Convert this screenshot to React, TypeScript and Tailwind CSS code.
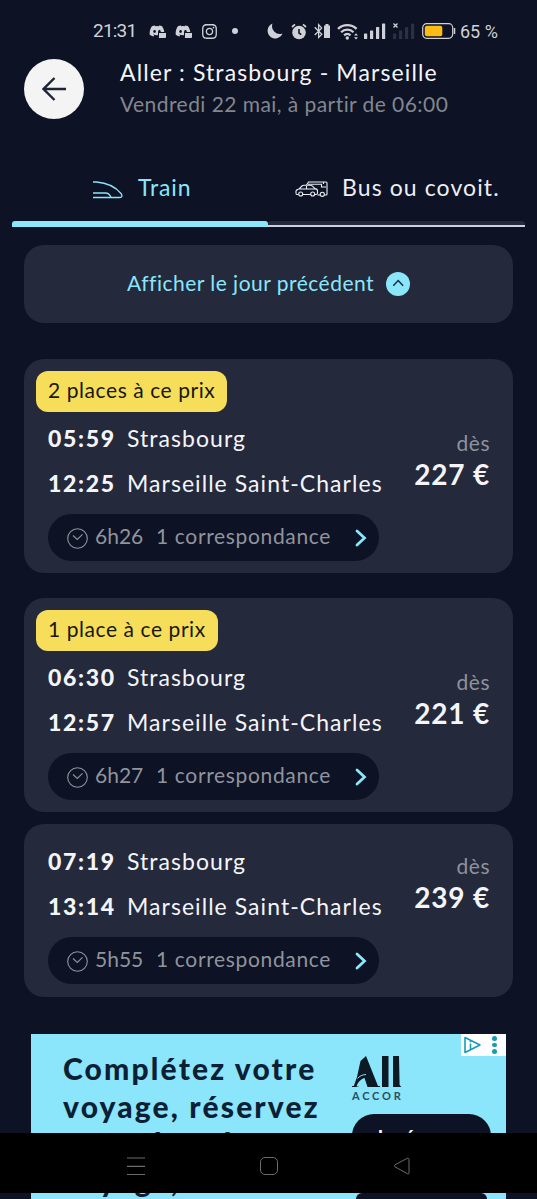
import type { ReactNode } from "react";
import clsx from "clsx";
import { FaBluetoothB, FaDiscord, FaInstagram } from "react-icons/fa";

type Journey = {
  badge?: string;
  departure: string;
  arrival: string;
  duration: string;
  price: string;
};

const journeys: Journey[] = [
  {
    badge: "2 places à ce prix",
    departure: "05:59",
    arrival: "12:25",
    duration: "6h26",
    price: "227 €",
  },
  {
    badge: "1 place à ce prix",
    departure: "06:30",
    arrival: "12:57",
    duration: "6h27",
    price: "221 €",
  },
  {
    departure: "07:19",
    arrival: "13:14",
    duration: "5h55",
    price: "239 €",
  },
];

function DiscordIcon() {
  return (
    <span className="relative block h-[16px] w-[17px]">
      <FaDiscord className="size-[16px]" />
      <span className="absolute right-0 bottom-[1px] h-[6px] w-[8px] rounded-[1px] border-t border-l border-[#0d1224] bg-[#d0d1d8]" />
    </span>
  );
}

function SignalBars({ className }: { className?: string }) {
  return (
    <svg viewBox="0 0 22 16" className={clsx("h-[16px] w-[22px]", className)} fill="currentColor">
      <rect x="0" y="10.5" width="3.2" height="5.5" rx="0.6" />
      <rect x="6" y="7.5" width="3.2" height="8.5" rx="0.6" />
      <rect x="12" y="4" width="3.2" height="12" rx="0.6" />
      <rect x="18" y="0.5" width="3.2" height="15.5" rx="0.6" />
    </svg>
  );
}

function StatusBar() {
  return (
    <div className="flex h-[59px] items-center pt-[3px] pl-[93px] font-[Roboto,sans-serif] text-[19px] text-[#d0d1d8]">
      <span className="w-[56px] text-[19px] tracking-[-0.8px]">21:31</span>
      <div className="flex w-[114px] items-center gap-[9px]">
        <DiscordIcon />
        <DiscordIcon />
        <FaInstagram className="size-[17px]" />
        <span className="ml-[5px] size-[6px] rounded-full bg-current" />
      </div>
      <div className="flex items-center">
        {/* Do not disturb */}
        <svg viewBox="0 0 16 16" className="ml-[4px] size-[16px]" fill="currentColor">
          <path d="M5.500.6A7.700 7.700 0 1 0 15.500 10.500 7.800 7.800 0 0 1 5.500.6z" />
        </svg>
        {/* Alarm */}
        <svg viewBox="0 0 16 17" className="ml-[8px] h-[17px] w-[16px]" fill="none" stroke="currentColor">
          <circle cx="8" cy="9.5" r="6.8" fill="currentColor" stroke="none" />
          <path d="M1 4 4 1.3M15 4 12 1.3" strokeWidth="1.7" />
          <path d="M8 6v4l2.3 1.6" stroke="#0d1224" strokeWidth="1.6" />
        </svg>
        <FaBluetoothB className="ml-[6px] h-[16px] w-[11px]" />
        <svg viewBox="0 0 6 14" className="h-[14px] w-[6px]" fill="currentColor">
          <path d="M1.5 0h3v1.5H6V14H0V1.5h1.5z" />
        </svg>
        {/* Wifi */}
        <svg viewBox="0 0 22 17" className="ml-[7px] h-[17px] w-[22px]" fill="none" stroke="currentColor" strokeWidth="2.3">
          <path d="M1 5.8a13.4 13.4 0 0 1 18.6 0M4.1 9.2a8.8 8.8 0 0 1 12.4 0M7.1 12.3a4.6 4.6 0 0 1 6.4 0" />
          <circle cx="10.3" cy="15" r="1.7" fill="currentColor" stroke="none" />
          <path d="m17 12.5 2-2.2 2 2.2zM17 14.2l2 2.2 2-2.2z" fill="currentColor" stroke="none" />
        </svg>
        <SignalBars className="ml-[5px]" />
        <span className="relative ml-[7px]">
          <SignalBars className="text-[#2c3040]" />
          <svg viewBox="0 0 5 5" className="absolute top-0 left-0 size-[5px]" stroke="currentColor" strokeWidth="1.3">
            <path d="m.5.5 4 4M4.5.5l-4 4" />
          </svg>
        </span>
        {/* Battery */}
        <svg viewBox="0 0 34 16" className="ml-[7px] h-[16px] w-[34px]" fill="none">
          <rect x="0.7" y="0.7" width="30" height="14.6" rx="4" stroke="currentColor" strokeWidth="1.2" />
          <rect x="2.8" y="2.8" width="17.5" height="10.4" rx="2" fill="#fdbb14" />
          <path d="M32.5 5v6" stroke="currentColor" strokeWidth="1.5" />
        </svg>
        <span className="ml-[4px] text-[18px] whitespace-nowrap">65 %</span>
      </div>
    </div>
  );
}

function Header() {
  return (
    <header className="flex h-[60px] pl-6">
      <button className="flex size-[60px] items-center justify-center rounded-full bg-[#f4f4f5]" aria-label="Retour">
        <svg viewBox="0 0 24 24" className="size-6" fill="none" stroke="#1c2436" strokeWidth="2.4">
          <path d="M24 12H2M12.5 1 1.5 12l11 11" />
        </svg>
      </button>
      <div className="pl-9 whitespace-nowrap">
        <h1 className="text-[23px] leading-[27px] tracking-[1.12px] text-[#f4f5f9]">
          Aller : Strasbourg - Marseille
        </h1>
        <p className="pt-[4px] text-[21px] leading-[28px] tracking-[0.44px] text-[#83868f]">
          Vendredi 22 mai, à partir de 06:00
        </p>
      </div>
    </header>
  );
}

function Tabs() {
  return (
    <nav className="mt-[31px] flex px-3">
      <button className="flex h-[77px] w-[256px] flex-col text-[#8ae6fa]">
        <span className="flex h-[71px] w-full items-center pt-[4px] pl-[80px] text-[23px] tracking-[0.9px]">
          <svg viewBox="0 0 31 18" className="mt-[4px] h-[18px] w-[31px]" fill="none" stroke="currentColor" strokeWidth="1.3">
            <path d="M1 1h3.500C15 1.800 24 6.500 29 12.500c2 2.800.6 4-2 4H1" />
            <path d="M1 12h12.500c3 0 4.500 1.800 5.500 4.500" />
          </svg>
          <span className="pl-[15px]">Train</span>
        </span>
        <span className="h-[6px] w-full rounded-t-[3px] bg-[#8ae6fa]" />
      </button>
      <button className="flex h-[77px] w-[257px] flex-col text-[#eeeff5]">
        <span className="flex h-[71px] w-full items-center pt-[4px] pl-[27px] text-[23px] tracking-[1.1px] whitespace-nowrap">
          <svg viewBox="0 0 33 16" className="mt-[3px] h-[16px] w-[33px]" fill="none" stroke="currentColor" strokeWidth="1.1">
            <path d="M11.500 4 13.500 1h17.500q1 0 1 1v11q0 1-1 1h-1.500M13 3.200h13.500v2.800H31M28.500 1v2M22.500 14H25" />
            <path d="M3.300 13.500H1.700Q1 13.500 1 12v-2q.5-1.500 3-2l3-3q.7-.700 2-.7h6.500q1 0 2 .8l2.500 2.500q2.500.4 2.500 2.400v2q0 1.500-1.500 1.500H20M8 13.500h7.500M4 8h16M11.500 5v3" />
            <circle cx="5.700" cy="13" r="2" />
            <circle cx="17.700" cy="13" r="2" />
            <circle cx="27.300" cy="13.300" r="2.100" />
          </svg>
          <span className="pl-[14px]">Bus ou covoit.</span>
        </span>
        <span className="h-[6px] w-full rounded-t-[3px] border-b-2 border-[#ccd0e2] bg-[#24293c]" />
      </button>
    </nav>
  );
}

function PreviousDay() {
  return (
    <button className="mx-6 mt-[18px] flex h-[78px] w-[489px] items-center rounded-[20px] bg-[#24293c] pl-[103px] text-[21px] whitespace-nowrap text-[#8ae6fa]">
      <span className="w-[259px] pb-[3px] text-left tracking-[0.48px]">Afficher le jour précédent</span>
      <svg viewBox="0 0 24 24" className="size-6" fill="none">
        <circle cx="12" cy="12" r="12" fill="#8ae6fa" />
        <path d="m7.300 13.800 4.900-5.200 4.900 5.200" stroke="#1c2a40" strokeWidth="1.500" />
      </svg>
    </button>
  );
}

function Stop({ time, name }: { time: string; name: string }) {
  return (
    <div className="flex h-[45px] items-center pl-6 text-[23px] whitespace-nowrap text-[#f4f5f9]">
      <span className="w-[79px] font-black tracking-[1.700px]">{time}</span>
      <span className="tracking-[1.05px]">{name}</span>
    </div>
  );
}

function JourneyCard({ data, className }: { data: Journey; className?: string }) {
  return (
    <article className={clsx("mx-6 rounded-[20px] bg-[#24293c]", data.badge ? "h-[214px] pt-3" : "h-[173px] pt-[15px]", className)}>
      {data.badge && (
        <div className="mb-[4px] ml-3 flex h-[41px] w-fit items-center rounded-xl bg-[#f6de5b] px-3 pb-[3px] text-[21px] tracking-[0.57px] whitespace-nowrap text-[#17180f]">
          {data.badge}
        </div>
      )}
      <div className="flex justify-between">
        <div>
          <Stop time={data.departure} name="Strasbourg" />
          <Stop time={data.arrival} name="Marseille Saint-Charles" />
        </div>
        <div className="pt-[12px] pr-[23px] text-right whitespace-nowrap">
          <p className="text-[21px] leading-[30px] tracking-[0.5px] text-[#8f929c]">dès</p>
          <p className="text-[28px] leading-[33px] font-bold tracking-[0.8px] text-[#f4f5f9]">{data.price}</p>
        </div>
      </div>
      <button className="mt-[8px] ml-6 flex h-[47px] w-[331px] items-center rounded-full bg-[#0d1224] pl-[19px] text-[21px] whitespace-nowrap text-[#91949d]">
        <svg viewBox="0 0 21 21" className="mt-[2px] size-[21px]" fill="none" stroke="currentColor" strokeWidth="1.100">
          <circle cx="10.500" cy="10.500" r="9.800" />
          <path d="m6 7.500 4.300 4L15.500 6.300" />
        </svg>
        <span className="w-[68px] pb-[3px] pl-[7px] text-left">{data.duration}</span>
        <span className="w-[199px] pb-[3px] text-left tracking-[0.65px]">1 correspondance</span>
        <svg viewBox="0 0 12 18" className="h-[18px] w-[12px]" fill="none" stroke="#8ae6fa" strokeWidth="2.800">
          <path d="m2 2 7.500 7L2 16" strokeLinecap="round" />
        </svg>
      </button>
    </article>
  );
}

function AdLine({ children }: { children: ReactNode }) {
  return <p className="h-[37.500px] leading-[37px]">{children}</p>;
}

function AdBanner() {
  return (
    <section className="relative mx-[31px] mt-[37px] flex h-[99px] overflow-hidden bg-[#8be5fb] pt-[16px] pl-[32px] whitespace-nowrap">
      <div className="w-[289px] text-[30px] font-black tracking-[2.150px] text-[#0d1f35]">
        <AdLine>Complétez votre</AdLine>
        <AdLine>voyage, réservez</AdLine>
        <AdLine>votre hôtel</AdLine>
      </div>
      <div className="text-[#0c1a26]">
        <svg viewBox="0 0 50 33" className="mt-[6px] h-[33px] w-[50px]" fill="currentColor">
          <path d="M8.500 5 14 0l12 30h2v1H15.500l-3-9C8.500 23 5.500 27 4.500 30.500h2v.5H0v-1h1.800L5 21z" />
          <path d="M5.500 22.500c2-2.500 5-3.800 8.500-4" stroke="#8be5fb" strokeWidth="1" fill="none" />
          <path d="M30 0h6.500v31H30zM41 0h6l.6 29 1.800 2H41z" />
        </svg>
        <p className="text-[11px] leading-[14px] font-bold tracking-[2.800px] text-[#2a4f60]">ACCOR</p>
        <div className="mt-[11px] h-[60px] w-[139px] rounded-[22px] bg-[#0d1224] pt-[9px] pl-[23px] text-[19px] font-bold text-white">
          Je réserve
        </div>
      </div>
      <div className="absolute top-0 right-0 flex h-[22px] w-[45px] items-center gap-[11px] bg-white pl-[3px]">
        <svg viewBox="0 0 17 18" className="h-[18px] w-[17px]" fill="none" stroke="#169bb5" strokeWidth="1.600">
          <path d="M1 1.500v15L16 9z" strokeLinejoin="round" />
          <path d="M6.500 7.500v6M6.500 4.800v1.500" />
        </svg>
        <div className="flex flex-col gap-[2px]">
          <span className="size-[4.500px] rounded-full bg-[#169bb5]" />
          <span className="size-[4.500px] rounded-full bg-[#169bb5]" />
          <span className="size-[4.500px] rounded-full bg-[#169bb5]" />
        </div>
      </div>
    </section>
  );
}

function SystemNav() {
  return (
    <div className="flex h-[60px] items-center bg-black pt-[6px] pl-[127px] text-[#6c6c6c]">
      <svg viewBox="0 0 18 18" className="size-[18px]" stroke="currentColor" strokeWidth="1.200">
        <path d="M0 1h18M0 9.300h18M0 17.500h18" />
      </svg>
      <span className="ml-[115px] size-[18px] rounded-[5px] border border-current" />
      <svg viewBox="0 0 17 18" className="ml-[115px] h-[18px] w-[17px]" fill="none" stroke="currentColor">
        <path d="M14.500 1.200 2 7.800q-1.500 1 0 2l12.500 7q1.500.5 1.500-1v-13.500q0-1.500-1.500-1z" />
      </svg>
    </div>
  );
}

// Slice of the banner that shows below the system navigation
function AdFooter() {
  return (
    <div className="mx-[31px] flex h-[6px] items-end overflow-hidden bg-[#8be5fb] pl-[32px] text-[30px] font-black tracking-[2.150px] text-[#0d1f35]">
      <span className="h-[6px] w-[293px] leading-[37px]">
        <span className="-mt-[31px] block">voyage,</span>
      </span>
      <span className="h-[6px] w-[131px] rounded-t-[18px] bg-[#0d1224]" />
    </div>
  );
}

export default function App() {
  return (
    <main className="flex h-[1199px] w-[537px] flex-col overflow-hidden bg-[#0d1224] font-[Lato,sans-serif]">
      <StatusBar />
      <Header />
      <Tabs />
      <PreviousDay />
      <JourneyCard data={journeys[0]} className="mt-[36px]" />
      <JourneyCard data={journeys[1]} className="mt-[25px]" />
      <JourneyCard data={journeys[2]} className="mt-[12px]" />
      <AdBanner />
      <SystemNav />
      <AdFooter />
    </main>
  );
}
